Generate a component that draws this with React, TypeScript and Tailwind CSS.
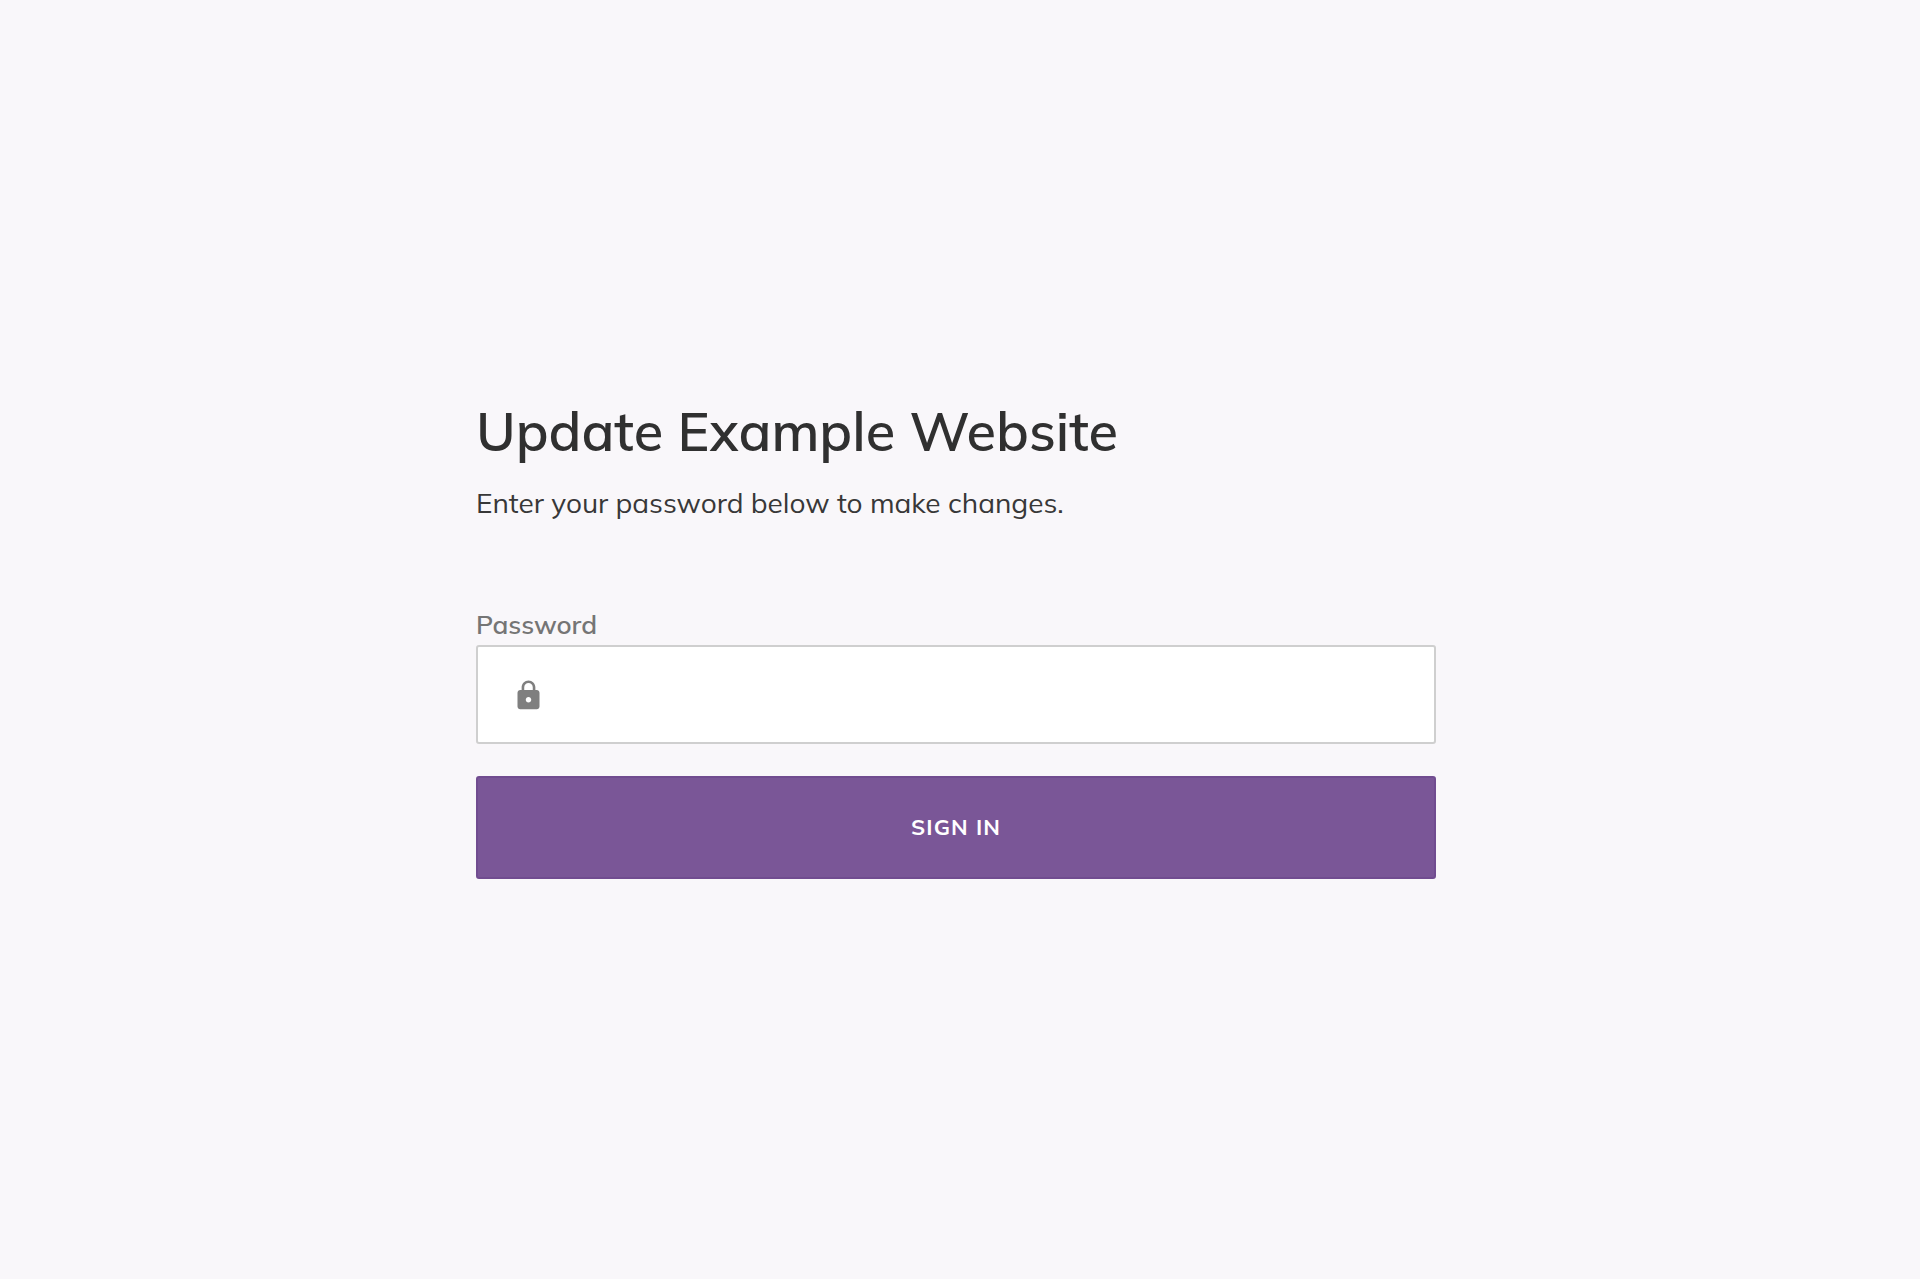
import { MdLock } from "react-icons/md";

export default function App() {
  return (
    <main className="flex min-h-screen items-center justify-center bg-[#f9f7fa] pr-2 pb-[6px] font-['Mulish','Muli','Lato',sans-serif] text-[#303030]">
      <form className="w-full max-w-[960px]" onSubmit={(e) => e.preventDefault()}>
        <h1 className="text-[54px] leading-[72px] font-semibold">Update Example Website</h1>
        <p className="mt-4 text-[28px] leading-10 text-[#383838]">Enter your password below to make changes.</p>
        <label htmlFor="password" className="mt-[82px] block text-[26px] leading-10 font-semibold text-[#757575]">
          Password
        </label>
        <div className="flex h-[99px] items-center rounded-[3px] border-2 border-[#cfcfcf] bg-white pt-[3px] pl-[34px]">
          <MdLock className="size-[33px] shrink-0 text-[#7f7f7f]" aria-hidden="true" />
          <input
            id="password"
            type="password"
            className="h-full min-w-0 flex-1 bg-transparent px-6 text-[26px] outline-none"
          />
        </div>
        <button
          type="submit"
          className="mt-8 h-[103px] w-full rounded-[3px] border-2 border-[#714c90] bg-[#7a5697] text-[22px] font-bold tracking-wider text-white uppercase"
        >
          Sign in
        </button>
      </form>
    </main>
  );
}
